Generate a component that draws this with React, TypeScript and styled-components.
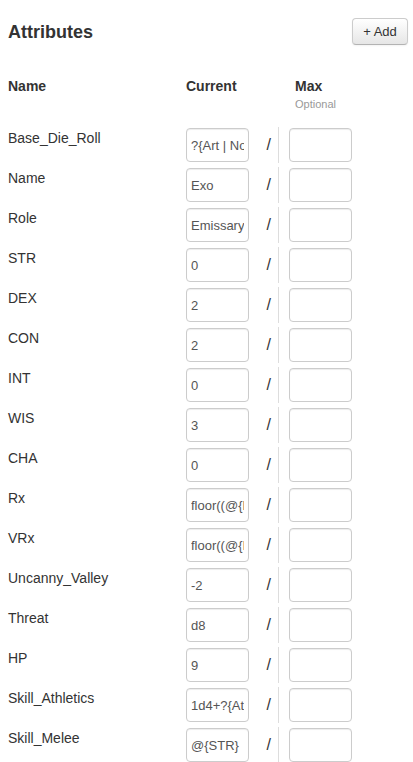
import React from "react";
import styled, { createGlobalStyle } from "styled-components";

const Global = createGlobalStyle`
  html, body { margin: 0; padding: 0; background: #fff; }
  body { font-family: "Liberation Sans", Arial, sans-serif; color: #333; font-size: 14px; }
`;

const Page = styled.div`
  padding: 0 5px 0 8px;
`;

const TitleBar = styled.div`
  margin-top: 18px;
  height: 27px;
  display: flex;
  align-items: center;
  justify-content: space-between;
`;

const Title = styled.h2`
  margin: 0;
  font-size: 18px;
  font-weight: bold;
  color: #333;
  line-height: 22px;
`;

const AddButton = styled.button`
  width: 56px;
  height: 27px;
  box-sizing: border-box;
  border: 1px solid #ccc;
  border-bottom-color: #b3b3b3;
  border-radius: 4px;
  background: linear-gradient(#ffffff, #e6e6e6);
  box-shadow: inset 0 1px 0 rgba(255,255,255,0.2), 0 1px 2px rgba(0,0,0,0.05);
  font-family: "Liberation Sans", Arial, sans-serif;
  font-size: 13px;
  color: #333;
  padding: 0;
`;

const HeaderRow = styled.div`
  margin-top: 33px;
  display: flex;
  height: 50px;
`;

const HeadCell = styled.div<{ $w: number }>`
  width: ${(p) => p.$w}px;
  display: flex;
  flex-direction: column;
`;

const HeadLabel = styled.div`
  font-weight: bold;
  font-size: 14px;
  line-height: 16px;
`;

const Hint = styled.div`
  font-size: 11px;
  line-height: 14px;
  color: #999;
  margin-top: 3px;
`;

const Row = styled.div`
  display: flex;
  height: 40px;
  align-items: flex-start;
`;

const NameCell = styled.div`
  width: 178px;
  font-size: 14px;
  line-height: 16px;
  padding-top: 2px;
`;

const Field = styled.input`
  width: 63px;
  height: 34px;
  box-sizing: border-box;
  border: 1px solid #ccc;
  border-radius: 4px;
  padding: 0 4px;
  font-family: "Liberation Sans", Arial, sans-serif;
  font-size: 13px;
  color: #555;
  background: #fff;
  margin: 0;
  box-shadow: inset 0 1px 1px rgba(0,0,0,0.075);
`;

const Slash = styled.div`
  width: 29px;
  height: 34px;
  display: flex;
  align-items: center;
  justify-content: flex-end;
  padding-right: 7px;
  box-sizing: border-box;
  font-size: 16px;
  color: #333;
`;

const Divider = styled.div`
  width: 1px;
  height: 36px;
  background: #ddd;
  margin-top: -1px;
  margin-right: 10px;
`;

const rows: [string, string][] = [
  ["Base_Die_Roll", "?{Art | None,0|Art,1}"],
  ["Name", "Exo"],
  ["Role", "Emissary"],
  ["STR", "0"],
  ["DEX", "2"],
  ["CON", "2"],
  ["INT", "0"],
  ["WIS", "3"],
  ["CHA", "0"],
  ["Rx", "floor((@{DEX}+@{WIS})/2)"],
  ["VRx", "floor((@{INT}+@{CHA})/2)"],
  ["Uncanny_Valley", "-2"],
  ["Threat", "d8"],
  ["HP", "9"],
  ["Skill_Athletics", "1d4+?{Athletics}"],
  ["Skill_Melee", "@{STR}"],
];

export default function App() {
  return (
    <Page>
      <Global />
      <TitleBar>
        <Title>Attributes</Title>
        <AddButton>+ Add</AddButton>
      </TitleBar>
      <HeaderRow>
        <HeadCell $w={178}>
          <HeadLabel>Name</HeadLabel>
        </HeadCell>
        <HeadCell $w={109}>
          <HeadLabel>Current</HeadLabel>
        </HeadCell>
        <HeadCell $w={80}>
          <HeadLabel>Max</HeadLabel>
          <Hint>Optional</Hint>
        </HeadCell>
      </HeaderRow>
      {rows.map(([name, val]) => (
        <Row key={name}>
          <NameCell>{name}</NameCell>
          <Field defaultValue={val} />
          <Slash>/</Slash>
          <Divider />
          <Field defaultValue="" />
        </Row>
      ))}
    </Page>
  );
}
